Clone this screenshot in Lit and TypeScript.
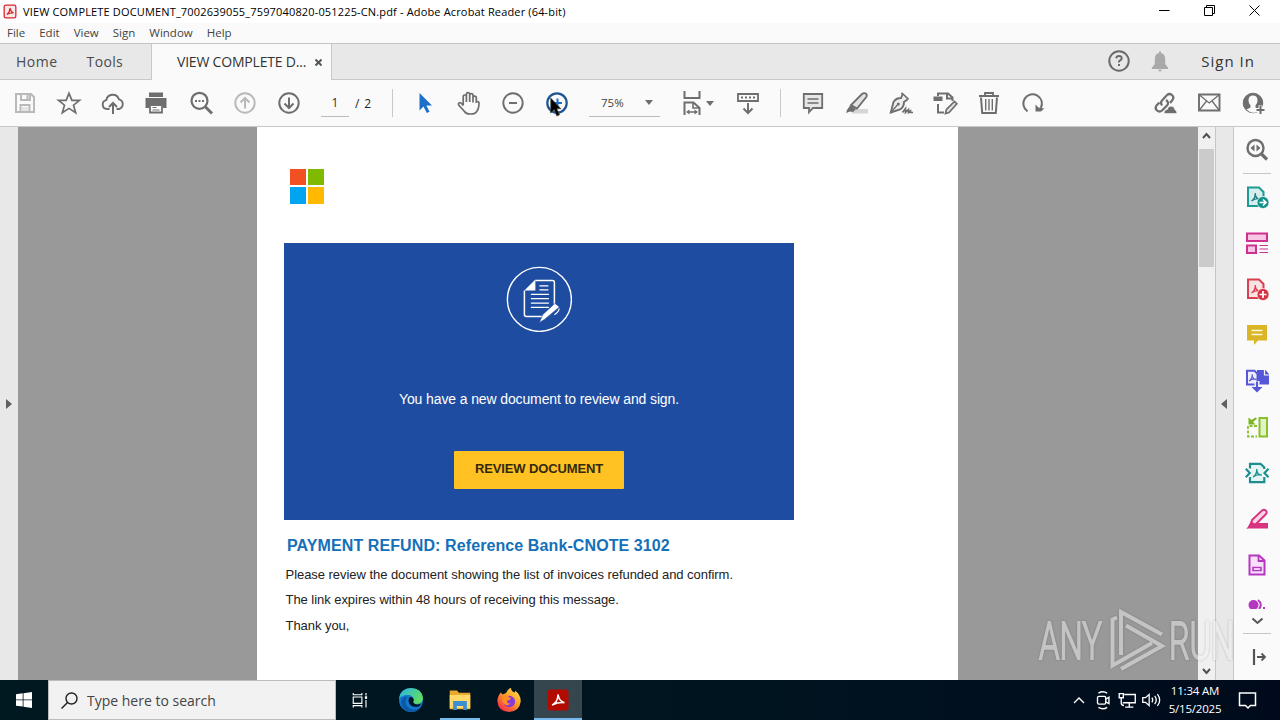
import {LitElement, html, svg, css, TemplateResult} from 'lit';
import {customElement, property} from 'lit/decorators.js';

const pdfMark = svg`<path d="M8 16c3-2 4-5 3.700-8c0 4 2 6 5 6c-3-1-6 0-8.700 2" fill="none" stroke="currentColor" stroke-width="1.300"/>`;

const icons: Record<string, TemplateResult> = {
    save: svg`<g fill="none" stroke="#b9b9b9" stroke-width="2"><path d="M3 3h15l3 3v15H3z"/><path d="M8 3v6h9V3"/><path d="M7.500 21v-7h9v7" /></g><path d="M13.500 4h2v4h-2z" fill="#b9b9b9"/><path d="M9 16h6v4H9z" fill="#e3e3e3"/>`,
    star: svg`<path d="M12 2.300l2.900 7h7.600l-6 4.900 2.200 7.500-6.700-4.300-6.700 4.300 2.200-7.500-6-4.900h7.600z" fill="none" stroke="#6e6e6e" stroke-width="1.700"/>`,
    cloud: svg`<path d="M8.500 18H6a4.500 4.500 0 0 1-.7-8.900a6.500 6.500 0 0 1 12.600-.8a5 5 0 0 1 .1 9.700h-2.500" fill="none" stroke="#6e6e6e" stroke-width="1.900"/><path d="M12 23V12.500M8 16l4-4 4 4" fill="none" stroke="#6e6e6e" stroke-width="2"/>`,
    print: svg`<g transform="translate(-1 0)"><path d="M5 1.500h14v4.500H5zM1.500 7h21v10H19v-3H5v3H1.500z" fill="#6e6e6e"/><path d="M6 14h12v7.500H6z" fill="#fff" stroke="#6e6e6e" stroke-width="1.800"/><path d="M8.500 16.500h4M8.500 19h7" stroke="#6e6e6e" stroke-width="1.200"/></g>`,
    find: svg`<circle cx="10.500" cy="9.800" r="8" fill="none" stroke="#6e6e6e" stroke-width="2.200"/><path d="M16 15.500l7 7" stroke="#6e6e6e" stroke-width="3"/><path d="M6 9h2v2H6zM9.500 9h2v2h-2zM13 9h2v2h-2z" fill="#6e6e6e"/>`,
    up: svg`<g fill="none" stroke="#b9b9b9" stroke-width="2"><circle cx="12" cy="12" r="9.700"/><path d="M12 17.500V7.500M7.500 11.500L12 7l4.500 4.500"/></g>`,
    down: svg`<g fill="none" stroke="#6e6e6e" stroke-width="2"><circle cx="12" cy="12" r="9.700"/><path d="M12 6.500v10M7.500 12.500L12 17l4.500-4.500"/></g>`,
    select: svg`<path d="M6.500 2v17.500l4-4 3.300 6.500 2.700-1.300-3.100-6.200h5.600z" fill="#1d70c9"/>`,
    hand: svg`<path d="M6.200 14.500V5.600a1.600 1.600 0 0 1 3.200 0V11V3.200a1.600 1.600 0 0 1 3.300 0V11V4.200a1.600 1.600 0 0 1 3.300 0V11.500V6.800a1.600 1.600 0 0 1 3.300 0L19.300 11q2.700-1 2.700 1q0 6-2.700 9q-1.300 2-5.300 2h-1q-4 0-5.500-2.500L1.700 14q-.8-1.800.8-2.300q1.500-.4 3.700 2.800" fill="none" stroke="#6e6e6e" stroke-width="1.700"/>`,
    minus: svg`<circle cx="12" cy="12" r="9.700" fill="none" stroke="#6e6e6e" stroke-width="1.900"/><path d="M8 12h8" stroke="#6e6e6e" stroke-width="2"/>`,
    plus: svg`<circle cx="12" cy="12" r="9.700" fill="none" stroke="#1d5494" stroke-width="2.200"/><path d="M8 12h9M12.500 7.500v9" stroke="#1d70c9" stroke-width="2"/>`,
    fit: svg`<g fill="none" stroke="#6e6e6e" stroke-width="2"><path d="M4.500 0v7h15V0M4.500 24V11.500h9l6 5.500v7"/><path d="M13 11.500v5.500h6M8 21h9" stroke-width="1.600"/></g><path d="M6 21l3.500-2.500v5zM18 21l-3.500-2.500v5z" fill="#6e6e6e"/>`,
    read: svg`<path d="M2 3h20v7H2z" fill="none" stroke="#6e6e6e" stroke-width="1.800"/><path d="M5 6.500h2M9 6.500h2M13 6.500h2M17 6.500h2" stroke="#6e6e6e" stroke-width="2"/><path d="M12 12v9M7.500 17.500L12 22l4.500-4.500" fill="none" stroke="#6e6e6e" stroke-width="2"/>`,
    comment: svg`<path d="M2.800 3h18.400v14H12l-4 4.200V17H2.800z" fill="#e6e6e6" stroke="#6e6e6e" stroke-width="1.800"/><path d="M6.500 8h11M6.500 12h11" stroke="#6e6e6e" stroke-width="1.400"/>`,
    marker: svg`<path d="M10 18h13v4.500H6z" fill="#d6d6d6"/><path d="M17 3q2-1.500 3.800-.5q1.700 1.500.5 3.500L12 17.500l-6-3.500z" fill="#e2e2e2" stroke="#6e6e6e" stroke-width="1.800"/><path d="M5.500 14l5.500 4-3 3-3-.5L1 22l1-3z" fill="#6e6e6e"/>`,
    pen: svg`<path d="M12.500 2l7 6.500" stroke="#6e6e6e" stroke-width="2"/><path d="M13.500 3.500L12 7Q7 7 4.500 11L1.800 21.500L11 18.500q4-2.500 4-7.500l3.500-2.500" fill="#ededed" stroke="#6e6e6e" stroke-width="1.900"/><path d="M1.800 21.500l7-8" stroke="#6e6e6e" stroke-width="1.300"/><circle cx="9.300" cy="13" r="1.500" fill="#6e6e6e"/><path d="M13.500 21.500l3-4v4l3-3v3l2-1.500v1.500h2.500" fill="none" stroke="#6e6e6e" stroke-width="1.700"/>`,
    edit: svg`<g fill="none" stroke="#6e6e6e" stroke-width="2"><path d="M5 5V2.500h10l4.500 4V10M14 2.500V7.500h5.500M5 13v8.500h6"/><path d="M12.500 22.500l1-4L21.500 10.500l2.300 2.300L16 21.500z" fill="#e6e6e6" stroke-width="1.700"/></g><path d="M.5 5.500h9V10h-9z" fill="#6e6e6e"/>`,
    trash: svg`<g fill="none" stroke="#6e6e6e"><path d="M2 5h20M8 4.500V2h8v2.500" stroke-width="1.800"/><path d="M4 6.500l1.200 15.500h13.600L20 6.500" stroke-width="2"/><path d="M8.700 8v11.500M12 8v11.500M15.300 8v11.500" stroke-width="1.400"/></g>`,
    rotate: svg`<path d="M6.500 20.300A9.300 9.300 0 1 1 19.800 17" fill="none" stroke="#6e6e6e" stroke-width="2"/><path d="M14.500 20.500v-7L17.500 16.500L23.300 17.500L20 20.500z" fill="#6e6e6e"/>`,
    link: svg`<g fill="none" stroke="#6e6e6e" stroke-width="2.200"><path d="M9 14.500q-2-3 0-5l5-5.500q2.500-2 5 0t.5 5L17 12"/><path d="M13 9q3.500 2.500 1 5.500L9 19.500q-2.500 2-5 0t-.5-5L6.500 11.500"/></g><path d="M11 22.500q0-4 3.300-4q1-4 4.700-3.200q2.700.5 2.700 3.200q2.300 1 2.300 4z" fill="#6e6e6e" stroke="#fafafa" stroke-width=".6"/>`,
    mail: svg`<path d="M2 3.500h20.500v16H2z" fill="none" stroke="#6e6e6e" stroke-width="1.900"/><path d="M2.500 4L12.200 12l9.800-8M2.500 19l7-9M22 19l-7-9" fill="none" stroke="#6e6e6e" stroke-width="1.300"/>`,
    user: svg`<circle cx="12" cy="12" r="9.800" fill="#6e6e6e" stroke="#6e6e6e"/><path d="M12 4.500q4.500 0 4.500 5q0 3-2 5v2l2 1v3.500q-4 1.500-8-.2L5.500 18.500l4-2v-2q-2-2-2-5q0-5 4.500-5z" fill="#fafafa"/><path d="M19.500 14.500v9M15.500 19h9" stroke="#fafafa" stroke-width="4"/><path d="M19.500 15v8M15.500 19h8" stroke="#6e6e6e" stroke-width="2"/>`,
    help: svg`<circle cx="12" cy="12" r="9.700" fill="none" stroke="#6a6a6a" stroke-width="2"/><path d="M9.300 9.300q.2-2.300 2.700-2.300t2.700 2.200q0 1.500-1.500 2.200T12 13.500" fill="none" stroke="#6a6a6a" stroke-width="2"/><path d="M11 15h2v2h-2z" fill="#6a6a6a"/>`,
    bell: svg`<path d="M11 2.500h2V4q4.200 1 4.200 6v5l3 4v1H3.800v-1l3-4v-5q0-5 4.200-6zM10 20.800h4q-.5 1.700-2 1.700t-2-1.700z" fill="#a9a9a9"/>`,
    zoomSide: svg`<circle cx="10.500" cy="10" r="8" fill="none" stroke="#6e6e6e" stroke-width="2.400"/><path d="M16 15.500l6 6" stroke="#6e6e6e" stroke-width="3.200"/><path d="M9.500 6.500v7l-4-3.500zM11.500 6.500v7l4-3.500z" fill="#6e6e6e"/>`,
    exportPdf: svg`<path d="M3 2.500h11l4.500 4.500v14H3z" fill="#d5eeee" stroke="#1d9a94" stroke-width="2"/><g color="#1d7f7f" transform="translate(-1.500 0)">${pdfMark}</g><circle cx="18" cy="17.500" r="6" fill="#129089" stroke="#fafafa" stroke-width=".7"/><path d="M14.500 17.500h6M18 14.500l3 3-3 3" fill="none" stroke="#fff" stroke-width="1.700"/>`,
    organize: svg`<path d="M2 2.500h20V10H2zM2 14.500h9V22H2z" fill="#f8c6e4" stroke="#cf2f8f" stroke-width="2"/><path d="M14.500 14.500H23M14.500 18H23M14.500 21.500H23" stroke="#cf2f8f" stroke-width="1.200"/>`,
    createPdf: svg`<path d="M3 2.500h11l4.500 4.500v14H3z" fill="#fce3e3" stroke="#d7404f" stroke-width="2"/><g color="#d7404f" transform="translate(-1.500 0)">${pdfMark}</g><circle cx="18" cy="17.500" r="6" fill="#d7303f" stroke="#fafafa" stroke-width=".7"/><path d="M14.500 17.500h7M18 14v7" stroke="#fff" stroke-width="1.700"/>`,
    note: svg`<path d="M2 2h20v15.500H13l-4 4.500v-4.500H2z" fill="#d9b527"/><path d="M6.500 7.500h11M6.500 11.500h11" stroke="#fff8d8" stroke-width="1.700"/>`,
    combine: svg`<path d="M12 1h8.500L24 5v10.500H12z" fill="#5656d8"/><path d="M2 1.800h7.500l3 3v10.700H2z" fill="#eeeeff" stroke="#5656d8" stroke-width="2"/><g color="#5656d8" transform="translate(-2.800 -1.500) scale(.85)">${pdfMark}</g><path d="M12 12v8" stroke="#fafafa" stroke-width="5"/><path d="M12 12.500v7" stroke="#5656d8" stroke-width="2.200"/><path d="M6.500 18h11L12 23.500z" fill="#5656d8"/><path d="M19.500 1v5H24" fill="none" stroke="#fafafa" stroke-width="1.200"/>`,
    pages: svg`<path d="M14.500 3h7.500v18.500h-7.500z" fill="#e0f3c8" stroke="#8ac02c" stroke-width="2"/><path d="M12 11H3v10.500h9" fill="none" stroke="#8ac02c" stroke-width="1.800" stroke-dasharray="3 1.500"/><path d="M3.500 2.500v7h7L8 7l4-3.500-1.500-1L6.500 5z" fill="#7ab51d"/>`,
    compress: svg`<path d="M5 4h10l4 4-1 4 1 9H5l1-9z" fill="#e4f5f5"/><path d="M5 7.500V2.800h10.500L19.300 6.500v1.500M5 16v5.200h14.300V16" fill="none" stroke="#1d8f8f" stroke-width="2.200"/><g color="#1d8f8f">${pdfMark}</g><path d="M.8 7.800L4.800 12 .8 16.200M23.500 7.800L19.500 12l4 4.200" fill="none" stroke="#1d8f8f" stroke-width="2.200"/>`,
    redact: svg`<path d="M11 16h12v5.500H1z" fill="#d8337f"/><path d="M17 3.500q2-1.500 3.800 0t0 3.800L11 17l-5 .5L7 13z" fill="#fbd3e6" stroke="#d8337f" stroke-width="1.900"/><path d="M6 14l4.500 3.500-2 2L2 21.500z" fill="#d8337f"/>`,
    form: svg`<path d="M4.500 2.500h9.500l5.500 5V21.500h-15z" fill="#f7e0fa" stroke="#b537c1" stroke-width="2"/><path d="M13.500 3v5h6" fill="none" stroke="#b537c1" stroke-width="1.800"/><path d="M8 14.500h8v3H8z" fill="#fff" stroke="#b537c1" stroke-width="1.600"/>`,
    app: svg`<rect x="2" y="1" width="20" height="22" rx="3" fill="#fbe9e9" stroke="#d9262d" stroke-width="2.200"/><path d="M6.500 17q5-3.500 5.200-9.500q.3-2 .8 0q.5 4.500 5.500 7q-5-.5-11.500 2.500z" fill="none" stroke="#d0272d" stroke-width="2"/>`,
    taskview: svg`<g fill="none" stroke="#fff" stroke-width="1.500"><path d="M3 8h11.500v8.500H3zM3 2.500v2.500h11.500V2.500M3 22v-2.500h11.500V22M20 2.500v3.500M20 12v10"/></g><path d="M18.500 7h3v3.500h-3z" fill="#fff"/>`,
    edge: svg`<defs><linearGradient id="eg" x1="0" y1="0" x2="1" y2=".5"><stop offset="0" stop-color="#28b4e8"/><stop offset="1" stop-color="#5fdc62"/></linearGradient></defs><circle cx="12" cy="12" r="12" fill="#1377cf"/><path d="M0 10.500Q1.500 0 12 0t12 10q0 5.500-6 6q-5 0-3.500-3q1-5-4.500-6Q3 6.500 0 10.500z" fill="url(#eg)"/><path d="M8.500 8.500q-4 5.500 0 10.500q5 5 12.500 1q-3.500 4.500-9.500 4Q3 23 2 14q1-5.500 6.500-5.500z" fill="#0c59a4"/><path d="M11 9q3.500 0 3.800 3.200q-1.800 2.500 1.700 4q3 .8 5.500-.7q-1 3.500-5 3.500q-7-.5-7.500-6q0-3 1.500-4z" fill="#001822"/>`,
    folder: svg`<path d="M.8 1.500h8l2 2.500h12.400V22H.8z" fill="#e9a92c"/><path d="M.8 6.500h22.400V21H.8z" fill="#ffd868"/><path d="M4.500 13h15v10h-4v-4.500h-7V23h-4z" fill="#3d8fd3"/>`,
    firefox: svg`<defs><linearGradient id="ff" x1="1" y1="0" x2=".2" y2="1"><stop offset="0" stop-color="#fff04a"/><stop offset=".5" stop-color="#ff9a27"/><stop offset="1" stop-color="#f5254c"/></linearGradient></defs><path d="M4 4.500l1.500 2L9 5q2-4.500 5-5q0 3 3.500 4.500q1-1 .5-2q6 4.500 5.700 11Q22.500 23.500 12 24Q1 23.500.4 13Q.5 8 4 4.500z" fill="url(#ff)"/><circle cx="12.300" cy="13.500" r="5.800" fill="#8a3bd6"/><path d="M5.500 8.500q4-2 6.500.5l2 1.500q-1.500 2-4 2.200q0 3.300 3.500 2.800q-3.500 3.500-7 0q-2.500-3-1-7z" fill="#ff8d25"/>`,
    acrobat: svg`<rect x=".5" y=".5" width="23" height="23" rx="3.500" fill="#b30b00"/><path d="M5.500 17.500q6-3 6.300-10q.2-2.500.7 0q.8 5.500 6.500 7.500q-6-.8-13.500 2.500z" fill="none" stroke="#fff" stroke-width="1.600"/>`,
    camera: svg`<g fill="none" stroke="#fff" stroke-width="1.500"><rect x="6" y="8" width="9" height="8.500" rx="1.500"/><path d="M15 11l3.500-2v7L15 14M7 4.500q5-3 9.500 0M7 20q5 3 9.500 0"/></g>`,
    network: svg`<g fill="none" stroke="#fff" stroke-width="1.500"><path d="M9 6h12v9H7.500M14.500 15v4.500M10 19.800h9M3.500 5h4.500v4.500H3.500zM5.700 9.500v5.500q0 3 3 3"/></g>`,
    sound: svg`<g fill="none" stroke="#fff" stroke-width="1.400"><path d="M3 9.500h3L10 6v12l-4-3.500H3zM13 9.500q1.800 2.500 0 5M16 7.500q3.500 4.500 0 9M19 5.500q5 6.500 0 13"/></g>`,
    chat: svg`<path d="M3.500 5h16v12.500h-5L12 20l-2.500-2.500h-6z" fill="none" stroke="#fff" stroke-width="1.500"/>`,
};

@customElement('ui-icon')
export class UiIcon extends LitElement {
    static styles = css`
        :host { display: block; flex: none; width: 24px; height: 24px; }
        svg { display: block; width: 100%; height: 100%; overflow: visible; }
    `;

    @property() name = '';

    render() {
        return html`<svg viewBox="0 0 24 24">${icons[this.name]}</svg>`;
    }
}

@customElement('app-root')
export class AppRoot extends LitElement {
    static styles = css`
        :host {
            display: flex;
            flex-direction: column;
            position: relative;
            width: 1280px;
            height: 720px;
            overflow: hidden;
            background: #fafafa;
            font-family: 'Open Sans', 'Noto Sans', sans-serif;
            color: #222;
        }
        * { box-sizing: border-box; }
        span, p, h1 { white-space: nowrap; }
        .titlebar { display: flex; align-items: center; height: 23px; background: #fff; padding: 0 20px 0 3px; }
        .titlebar ui-icon { width: 14px; height: 15px; margin-top: -1px; }
        .title { margin-left: 6px; font-size: 11px; letter-spacing: .155px; color: #000; line-height: 22px; }
        .controls { display: flex; gap: 34px; margin-left: auto; margin-top: -3px; }
        .controls svg { width: 11px; height: 11px; }
        .menu { display: flex; height: 20px; padding-left: 7px; gap: 14px; font-size: 11.500px; letter-spacing: 0; line-height: 20px; color: #444; }
        .tabs { display: flex; height: 37px; background: #e8e8e8; border-top: 1px solid #c4c4c4; border-bottom: 1px solid #c8c8c8; font-size: 14px; line-height: 36px; color: #4b4b4b; }
        .home { margin-left: 16px; letter-spacing: .5px; }
        .tools { margin-left: 29px; letter-spacing: .35px; }
        .tab { display: flex; width: 181px; height: 37px; margin-left: auto; padding-left: 25px; background: #fafafa; border: solid #c8c8c8; border-width: 0 1px; color: #333; }
        .tab-name { letter-spacing: -.2px; }
        .left-tabs { display: flex; width: 332px; }
        .close { width: 7px; height: 7px; margin: 15px 0 0 9px; }
        .account { display: flex; align-items: center; margin-left: auto; padding-right: 25px; }
        .account ui-icon { margin: -2px 17px 0 0; }
        .signin { margin-left: 12px; font-size: 15px; letter-spacing: 1px; line-height: 35px; padding-bottom: 1px; color: #333; }
        .toolbar { display: flex; align-items: center; height: 47px; padding: 0 15px 0 13px; gap: 20px; background: #fafafa; border-bottom: 1px solid #c8c8c8; font-size: 12px; color: #444; }
        .page-no { width: 28px; height: 28px; line-height: 27px; text-align: center; border-bottom: 1px solid #bbb; color: #333; }
        .page-total { margin-left: -14px; width: 17px; color: #222; letter-spacing: .9px; }
        .sep { width: 1px; height: 28px; background: #c8c8c8; }
        .zoom-value { display: flex; align-items: center; width: 71px; height: 28px; padding: 0 7px 0 12px; border-bottom: 1px solid #bbb; justify-content: space-between; font-size: 11.500px; }
        .caret { width: 0; border: solid transparent; border-width: 5px 4px 0; border-top-color: #6e6e6e; }
        .fit { display: flex; align-items: center; gap: 2px; width: 36px; }
        .right-tools { display: flex; gap: 20px; margin-left: auto; }
        .cursor { position: absolute; left: 550px; top: 97px; width: 12px; height: 20px; }
        .main { display: flex; height: 553px; }
        .left-rail, .right-rail { display: flex; align-items: center; width: 18px; background: #e8e8e8; }
        .left-rail { padding-left: 6px; }
        .right-rail { padding-left: 5px; border-left: 1px solid #c6c6c6; }
        .tri-r, .tri-l { width: 0; border: 5px solid transparent; border-right-width: 0; border-left: 6px solid #606060; }
        .tri-l { border: 5px solid transparent; border-left-width: 0; border-right: 6px solid #606060; }
        .canvas { width: 1180px; background: #999; padding-left: 239px; }
        .page { width: 701px; height: 553px; padding: 42px 0 0 27px; background: #fff; font-family: 'Liberation Sans', Arial, sans-serif; }
        .logo { display: grid; grid-template: 16px 17px / 16px 16px; gap: 2px; margin-left: 6px; }
        .red { background: #f25022; }
        .green { background: #7fba00; }
        .blue { background: #00a4ef; }
        .yellow { background: #ffb900; }
        .hero { display: flex; flex-direction: column; align-items: center; width: 510px; height: 277px; margin-top: 39px; padding-top: 23px; background: #1e4ca1; color: #fff; }
        .hero svg { width: 66px; height: 66px; }
        .hero p { margin: 59px 0 0; font-size: 14px; line-height: 16px; letter-spacing: -.12px; }
        .button { width: 170px; height: 38px; margin-top: 44px; border-radius: 1px; background: #ffc222; color: #33290f; font-size: 13px; font-weight: 700; line-height: 35px; text-align: center; letter-spacing: -.12px; }
        h1 { margin: 16px 0 0 3px; font-size: 16px; line-height: 20px; font-weight: 700; letter-spacing: .1px; color: #1470b8; }
        .line { margin: 10px 0 0 1.500px; font-size: 13px; line-height: 15px; letter-spacing: -.045px; color: #222; }
        h1 + .line { margin-top: 11px; }
        .line:last-child { margin-top: 11px; }
        .scroll { display: flex; flex-direction: column; align-items: center; width: 17px; background: #f0f0f0; padding: 5px 0 5px; }
        .scroll svg { width: 9px; height: 8px; }
        .thumb { width: 15px; height: 118px; margin: 9px 0 auto; background: #cbcbcb; }
        .panel { display: flex; flex-direction: column; align-items: center; width: 47px; padding-top: 11px; border-left: 1px solid #c6c6c6; }
        .panel .rule { flex: none; width: 28px; height: 1px; margin: 11px 0; background: #c6c6c6; }
        .panel .icons { display: flex; flex-direction: column; gap: 22px; }
        .clip { width: 24px; height: 10px; margin-top: 22px; overflow: hidden; }
        .panel .chev { width: 13px; height: 8px; margin-top: 8px; }
        .panel .chev + .rule { margin: 8px 0 11px; }
        .panel .collapse { width: 15px; height: 16px; margin: 4px 0 0 4px; }
        .taskbar { display: flex; align-items: center; height: 40px; background: linear-gradient(90deg, #001820, #001420 60%, #000a1c); color: #fff; }
        .start { display: flex; justify-content: center; width: 48px; }
        .search { display: flex; align-items: center; width: 288px; height: 40px; padding-left: 12px; margin-right: 1px; background: #f2f2f2; border: 1px solid #bcbcbc; font-size: 14px; color: #444; }
        .search svg { width: 17px; height: 17px; margin-right: 9px; }
        .task { display: flex; align-items: center; justify-content: center; width: 49px; height: 40px; }
        .task ui-icon { width: 22px; height: 22px; }
        .task .small { width: 18px; height: 18px; margin-right: 3px; }
        .task .big { width: 24px; height: 24px; }
        .open { width: 40px; margin: 0 4px 0 5px; padding-top: 2px; border-bottom: 2px solid #76b9ed; }
        .active { width: 48px; margin-left: 1px; padding-top: 2px; background: #36464e; border-bottom: 2px solid #76b9ed; }
        .tray { display: flex; align-items: center; margin-left: auto; }
        .tray ui-icon { width: 22px; height: 22px; margin: 0 1px; }
        .tray .up { width: 12px; height: 7px; margin-right: 6px; }
        .clock { width: 66px; margin-left: -1px; font-size: 11.500px; line-height: 18px; text-align: center; letter-spacing: -.2px; }
        .tray .chat { width: 24px; height: 24px; margin: 0 20px 0 8px; }
        .watermark { position: absolute; left: 1030px; top: 605px; width: 210px; height: 75px; overflow: visible; opacity: .5; filter: drop-shadow(0 0 1px rgba(0, 0, 0, .4)); }
    `;

    icon(name: string, cls = '') {
        return html`<ui-icon class=${cls} name=${name}></ui-icon>`;
    }

    render() {
        return html`
            <div class="titlebar">
                ${this.icon('app')}
                <span class="title">VIEW COMPLETE DOCUMENT_7002639055_7597040820-051225-CN.pdf - Adobe Acrobat Reader (64-bit)</span>
                <div class="controls">
                    <svg viewBox="0 0 11 11"><path d="M0 5.500h10.500" stroke="#000"/></svg>
                    <svg viewBox="0 0 11 11"><path d="M.5 2.500h8v8h-8zM2.500 2.500v-2h8v8h-2" fill="none" stroke="#000"/></svg>
                    <svg viewBox="0 0 11 11"><path d="M.5.5l10 10M10.500.5l-10 10" stroke="#000"/></svg>
                </div>
            </div>
            <div class="menu">
                ${['File', 'Edit', 'View', 'Sign', 'Window', 'Help'].map((item) => html`<span>${item}</span>`)}
            </div>
            <div class="tabs">
                <div class="left-tabs">
                    <span class="home">Home</span>
                    <span class="tools">Tools</span>
                    <div class="tab">
                        <span class="tab-name">VIEW COMPLETE D...</span>
                        <svg class="close" viewBox="0 0 7 7"><path d="M.5.5l6 6M6.500.5l-6 6" stroke="#555" stroke-width="2"/></svg>
                    </div>
                </div>
                <div class="account">
                    ${this.icon('help')}${this.icon('bell')}
                    <span class="signin">Sign In</span>
                </div>
            </div>
            <div class="toolbar">
                ${['save', 'star', 'cloud', 'print', 'find', 'up', 'down'].map((name) => this.icon(name))}
                <span class="page-no">1</span>
                <span class="page-total">/ 2</span>
                <div class="sep"></div>
                ${['select', 'hand', 'minus', 'plus'].map((name) => this.icon(name))}
                <div class="zoom-value"><span>75%</span><div class="caret"></div></div>
                <div class="fit">${this.icon('fit')}<div class="caret"></div></div>
                ${this.icon('read')}
                <div class="sep"></div>
                ${['comment', 'marker', 'pen', 'edit', 'trash', 'rotate'].map((name) => this.icon(name))}
                <div class="right-tools">${['link', 'mail', 'user'].map((name) => this.icon(name))}</div>
            </div>
            <div class="main">
                <div class="left-rail"><div class="tri-r"></div></div>
                <div class="canvas">
                    <div class="page">
                        <div class="logo"><div class="red"></div><div class="green"></div><div class="blue"></div><div class="yellow"></div></div>
                        <div class="hero">
                            <svg viewBox="-.4 -.4 66 66" fill="none" stroke="#fff">
                                <circle cx="33" cy="33" r="32" stroke-width="1.400"/>
                                <path d="M29 14h17q2 0 2 2v22M36 50H20q-2 0-2-2V24" stroke-width="1.500"/>
                                <path d="M29 13v11H18z" fill="#fff" stroke="none"/>
                                <path d="M33 19.500h9M33 23.500h9M24.500 28h18M24.500 32.300h18M24.500 36.700h18M24.500 41h18" stroke-width="1.200"/>
                                <path d="M33 56l3.500-8L48.500 37l4.500 3.500L38 53z" fill="#fff" stroke="#1e4ca1" stroke-width=".5"/>
                                <path d="M52.500 42q1 2-4.500 6.500" stroke-width="1.200"/>
                            </svg>
                            <p>You have a new document to review and sign.</p>
                            <div class="button">REVIEW DOCUMENT</div>
                        </div>
                        <h1>PAYMENT REFUND: Reference Bank-CNOTE 3102</h1>
                        <p class="line">Please review the document showing the list of invoices refunded and confirm.</p>
                        <p class="line">The link expires within 48 hours of receiving this message.</p>
                        <p class="line">Thank you,</p>
                    </div>
                </div>
                <div class="scroll">
                    <svg viewBox="0 0 9 8"><path d="M1 6l3.500-4L8 6" fill="none" stroke="#505050" stroke-width="2"/></svg>
                    <div class="thumb"></div>
                    <svg viewBox="0 0 9 8"><path d="M1 2l3.500 4L8 2" fill="none" stroke="#505050" stroke-width="2"/></svg>
                </div>
                <div class="right-rail"><div class="tri-l"></div></div>
                <div class="panel">
                    ${this.icon('zoomSide')}
                    <div class="rule"></div>
                    <div class="icons">
                        ${['exportPdf', 'organize', 'createPdf', 'note', 'combine', 'pages', 'compress', 'redact', 'form'].map((name) => this.icon(name))}
                    </div>
                    <svg class="clip" viewBox="0 0 24 10"><circle cx="8.500" cy="6" r="5" fill="#b537c1"/><path d="M13 1q5 4 1 9" fill="none" stroke="#b537c1" stroke-width="2"/><path d="M18 8h2v2h-2z" fill="#b537c1"/></svg>
                    <svg class="chev" viewBox="0 0 13 8"><path d="M1.500 1.500l5 4.500 5-4.500" fill="none" stroke="#555" stroke-width="2"/></svg>
                    <div class="rule"></div>
                    <svg class="collapse" viewBox="0 0 15 16"><path d="M2 0v16" stroke="#555" stroke-width="2.200"/><path d="M5 8h8M9.500 4.500L13 8l-3.500 3.500" fill="none" stroke="#555" stroke-width="1.800"/></svg>
                </div>
            </div>
            <div class="taskbar">
                <div class="start"><svg width="16" height="16" viewBox="0 0 16 16"><path d="M0 2.200l6.700-.9v6.200H0zM7.500 1.200L16 0v7.500H7.500zM0 8.300h6.700v6.300L0 13.700zM7.500 8.300H16V16l-8.500-1.200z" fill="#fff"/></svg></div>
                <div class="search">
                    <svg viewBox="0 0 17 17"><circle cx="10.500" cy="6.500" r="5.500" fill="none" stroke="#222" stroke-width="1.400"/><path d="M6.500 10.500L.5 16.500" stroke="#222" stroke-width="1.500"/></svg>
                    <span>Type here to search</span>
                </div>
                <div class="task">${this.icon('taskview', 'small')}</div>
                <div class="task">${this.icon('edge', 'big')}</div>
                <div class="task open">${this.icon('folder')}</div>
                <div class="task">${this.icon('firefox', 'big')}</div>
                <div class="task active">${this.icon('acrobat')}</div>
                <div class="tray">
                    <svg class="up" viewBox="0 0 12 7"><path d="M1 6l5-5 5 5" fill="none" stroke="#fff" stroke-width="1.400"/></svg>
                    ${this.icon('camera')}${this.icon('network')}${this.icon('sound')}
                    <div class="clock">11:34 AM<br>5/15/2025</div>
                    ${this.icon('chat', 'chat')}
                </div>
            </div>
            <svg class="cursor" viewBox="0 0 12 20"><path d="M.7 1v15l3.500-3.300L6.800 19l2.700-1.200-2.600-6H11z" fill="#000" stroke="#555" stroke-width=".7"/></svg>
            <svg class="watermark" viewBox="0 0 210 75">
                <g fill="#f0f0f0" stroke="#f0f0f0" stroke-width="2" font-family="Roboto, sans-serif" font-size="52" font-weight="300">
                    <text x="9" y="54" textLength="63" lengthAdjust="spacingAndGlyphs">ANY</text>
                    <text x="139" y="54" textLength="65" lengthAdjust="spacingAndGlyphs">RUN</text>
                </g>
                <path d="M87 12.500l-4.500 2v46L122 38M91 50V7l41 22.500M96 20.500L132 41 91 64" fill="none" stroke="#f0f0f0" stroke-width="4"/>
            </svg>
        `;
    }
}
